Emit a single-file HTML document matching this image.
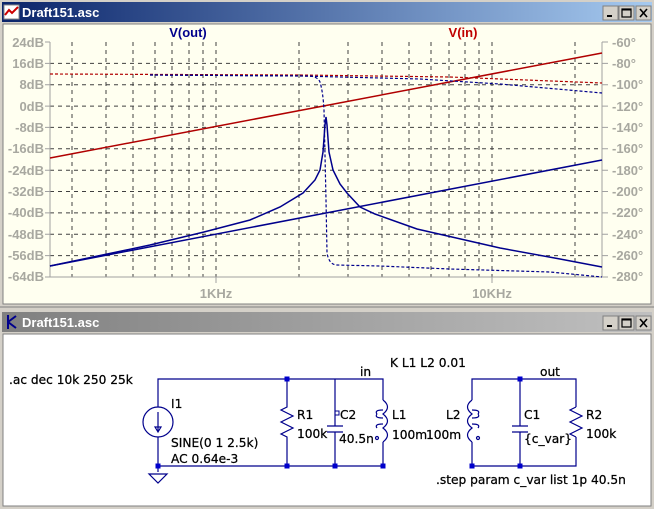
<!DOCTYPE html>
<html><head><meta charset="utf-8"><style>
html,body{margin:0;padding:0;width:654px;height:509px;overflow:hidden;background:#d4d0c8}
svg{display:block}
.ax{font-family:"Liberation Sans Narrow","Liberation Sans",sans-serif;font-size:13px;font-weight:bold;fill:#a8a8a0}
.sc{font-family:"DejaVu Sans","Liberation Sans",sans-serif;font-size:12.2px;fill:#000;stroke:#000;stroke-width:0.25}
.tt{font-family:"Liberation Sans",sans-serif;font-size:13px;font-weight:bold;fill:#fff}
</style></head><body>
<svg width="654" height="509" viewBox="0 0 654 509" xmlns="http://www.w3.org/2000/svg">
<defs>
<linearGradient id="ta" x1="0" x2="1"><stop offset="0" stop-color="#0a246a"/><stop offset="1" stop-color="#a6caf0"/></linearGradient>
<linearGradient id="ti" x1="0" x2="1"><stop offset="0" stop-color="#808080"/><stop offset="1" stop-color="#c0c0c0"/></linearGradient>
</defs>
<!-- window 1 -->
<rect x="0" y="0" width="654" height="308" fill="#d4d0c8"/>
<rect x="2" y="2" width="650" height="20" fill="url(#ta)"/>
<rect x="4" y="5" width="15" height="14" fill="#fff" stroke="#888"/>
<path d="M5 15 L9 10 L12 13 L18 7" stroke="#c00" stroke-width="2" fill="none"/>
<text x="22" y="17" class="tt">Draft151.asc</text>
<g fill="#d4d0c8"><rect x="603" y="6" width="15" height="14" stroke="#808080"/><rect x="619" y="6" width="15" height="14" stroke="#808080"/><rect x="636" y="6" width="15" height="14" stroke="#808080"/></g>
<rect x="607" y="15" width="5" height="2" fill="#000"/>
<rect x="622" y="9" width="9" height="8" fill="none" stroke="#000" stroke-width="1.2"/><line x1="622" y1="9.5" x2="631" y2="9.5" stroke="#000" stroke-width="2"/>
<path d="M640 9 L647 17 M647 9 L640 17" stroke="#000" stroke-width="1.6"/>
<rect x="3" y="24" width="648" height="280" fill="#fffff0" stroke="#808080"/>
<!-- grid -->
<g stroke="#404040" stroke-dasharray="4,4" stroke-width="1" fill="none">
<path d="M50 63.4H602M50 84.7H602M50 106.1H602M50 127.4H602M50 148.8H602M50 170.2H602M50 191.5H602M50 212.9H602M50 234.3H602M50 255.6H602"/>
<path d="M72 42V277M106 42V277M133 42V277M155 42V277M172 42V277M189 42V277M203 42V277M216 42V277M299 42V277M348 42V277M382 42V277M409 42V277M431 42V277M449 42V277M465 42V277M479 42V277M492 42V277M575 42V277"/>
</g>
<g stroke="#a0a0a0" fill="none"><path d="M50 42V277H602V42"/>
<path d="M45 42H50M45 63.4H50M45 84.7H50M45 106.1H50M45 127.4H50M45 148.8H50M45 170.2H50M45 191.5H50M45 212.9H50M45 234.3H50M45 255.6H50M45 277H50"/>
<path d="M602 42H608M602 63.4H608M602 84.7H608M602 106.1H608M602 127.4H608M602 148.8H608M602 170.2H608M602 191.5H608M602 212.9H608M602 234.3H608M602 255.6H608M602 277H608"/>
<path d="M216 277V283M492 277V283"/></g>
<g class="ax" text-anchor="end">
<text x="44" y="47">24dB</text><text x="44" y="68">16dB</text><text x="44" y="89">8dB</text><text x="44" y="111">0dB</text><text x="44" y="132">-8dB</text><text x="44" y="153">-16dB</text><text x="44" y="175">-24dB</text><text x="44" y="196">-32dB</text><text x="44" y="217">-40dB</text><text x="44" y="239">-48dB</text><text x="44" y="260">-56dB</text><text x="44" y="281">-64dB</text>
</g>
<g class="ax">
<text x="612" y="47">-60°</text><text x="612" y="68">-80°</text><text x="612" y="89">-100°</text><text x="612" y="111">-120°</text><text x="612" y="132">-140°</text><text x="612" y="153">-160°</text><text x="612" y="175">-180°</text><text x="612" y="196">-200°</text><text x="612" y="217">-220°</text><text x="612" y="239">-240°</text><text x="612" y="260">-260°</text><text x="612" y="281">-280°</text>
<text x="216" y="298" text-anchor="middle">1KHz</text><text x="492" y="298" text-anchor="middle">10KHz</text>
</g>
<text x="188" y="37" text-anchor="middle" font-family="Liberation Sans,sans-serif" font-size="13" font-weight="bold" fill="#00008c">V(out)</text>
<text x="463" y="37" text-anchor="middle" font-family="Liberation Sans,sans-serif" font-size="13" font-weight="bold" fill="#c00000">V(in)</text>
<!-- curves -->
<path d="M50 74 L300 75 L450 77 L602 83" stroke="#b00000" stroke-width="1.2" fill="none" stroke-dasharray="3,2"/>
<path d="M50 158 L602 53" stroke="#b00000" stroke-width="1.5" fill="none"/>
<path d="M150 75 L300 76 L420 79 L500 84 L602 93" stroke="#00008c" stroke-width="1.2" fill="none" stroke-dasharray="3,2"/>
<path d="M150 75 L310 76 Q318 77 320 82 Q323 92 324 110 L326 200 L327 253 Q329 264 336 265 L380 266 L450 269 L550 272 L602 277" stroke="#00008c" stroke-width="1.2" fill="none" stroke-dasharray="3,2"/>
<path d="M50 266 L602 160" stroke="#00008c" stroke-width="1.5" fill="none"/>
<path d="M50 266 L150 245 L204 232 L250 220 L280 207 L303 193 L315 180 L320 170 L323 152 L325 125 L326 117 L327 125 L329 152 L333 170 L340 184 L347 193 L360 207 L375 214 L417 229 L500 248 L560 259 L602 267" stroke="#00008c" stroke-width="1.5" fill="none"/>
<!-- window 2 -->
<rect x="0" y="308" width="654" height="201" fill="#d4d0c8"/>
<line x1="0" y1="307" x2="654" y2="307" stroke="#808080"/>
<rect x="2" y="312" width="650" height="20" fill="url(#ti)"/>
<path d="M8 315 L8 329 M8 322 L16 316 M8 322 L16 328" stroke="#00008c" stroke-width="2" fill="none"/>
<text x="22" y="327" class="tt" fill="#e8e8e8">Draft151.asc</text>
<g fill="#d4d0c8" stroke="#808080"><rect x="603" y="316" width="15" height="14"/><rect x="619" y="316" width="15" height="14"/><rect x="636" y="316" width="15" height="14"/></g>
<rect x="607" y="325" width="5" height="2" fill="#000"/>
<rect x="622" y="319" width="9" height="8" fill="none" stroke="#000" stroke-width="1.2"/><line x1="622" y1="319.5" x2="631" y2="319.5" stroke="#000" stroke-width="2"/>
<path d="M640 319 L647 327 M647 319 L640 327" stroke="#000" stroke-width="1.6"/>
<rect x="3" y="334" width="648" height="172" fill="#fff" stroke="#808080"/>
<!-- schematic -->
<g stroke="#00008c" stroke-width="1.2" fill="none">
<path d="M158 407 V379 H383 V400 M383 442 V466 H158 V437"/>
<path d="M472 400 V379 H576 V407 M576 437 V466 H472 V442"/>
<circle cx="158" cy="422" r="15"/>
<path d="M158 412 V431 M155 427 L158 432 L161 427 Z"/>
<path d="M158 466 V472 M149 474 H167 L158 483 Z"/>
<path d="M287 379 V407 L281 410 L293 416 L281 422 L293 428 L281 434 L287 437 V466"/>
<path d="M576 407 L570 410 L582 416 L570 422 L582 428 L570 434 L576 437"/>
<path d="M335 379 V426 M327 426 H343 M327 432 H343 M335 432 V466"/>
<path d="M520 379 V426 M512 426 H528 M512 432 H528 M520 432 V466"/>
<path d="M383 400 Q392 407 383 414 Q392 421 383 428 Q392 435 383 442"/>
<path d="M377 414 Q374 410 383 410 M377 414 Q374 418 383 418 M377 428 Q374 424 383 424"/>
<circle cx="377" cy="438" r="1.5"/>
<path d="M472 400 Q463 407 472 414 Q463 421 472 428 Q463 435 472 442"/>
<path d="M478 414 Q481 410 472 410 M478 414 Q481 418 472 418 M478 428 Q481 424 472 424"/>
<circle cx="478" cy="438" r="1.5"/>
</g>
<rect x="335" y="411" width="4" height="4" fill="none" stroke="#00008c"/>
<g fill="#0000cc"><rect x="284.5" y="376.5" width="5" height="5"/><rect x="517.5" y="376.5" width="5" height="5"/>
<rect x="155.5" y="463.5" width="5" height="5"/><rect x="284.5" y="463.5" width="5" height="5"/><rect x="332.5" y="463.5" width="5" height="5"/><rect x="380.5" y="463.5" width="5" height="5"/><rect x="469.5" y="463.5" width="5" height="5"/><rect x="517.5" y="463.5" width="5" height="5"/></g>
<g class="sc">
<text x="9" y="384">.ac dec 10k 250 25k</text>
<text x="171" y="408">I1</text>
<text x="171" y="447">SINE(0 1 2.5k)</text>
<text x="171" y="463">AC 0.64e-3</text>
<text x="297" y="419">R1</text><text x="297" y="438">100k</text>
<text x="340" y="419">C2</text><text x="339" y="443">40.5n</text>
<text x="392" y="419">L1</text><text x="392" y="439">100m</text>
<text x="446" y="419">L2</text><text x="426" y="439">100m</text>
<text x="524" y="419">C1</text><text x="524" y="443">{c_var}</text>
<text x="586" y="419">R2</text><text x="586" y="438">100k</text>
<text x="360" y="376">in</text><text x="540" y="376">out</text>
<text x="390" y="367">K L1 L2 0.01</text>
<text x="436" y="484">.step param c_var list 1p 40.5n</text>
</g>
</svg>
</body></html>
